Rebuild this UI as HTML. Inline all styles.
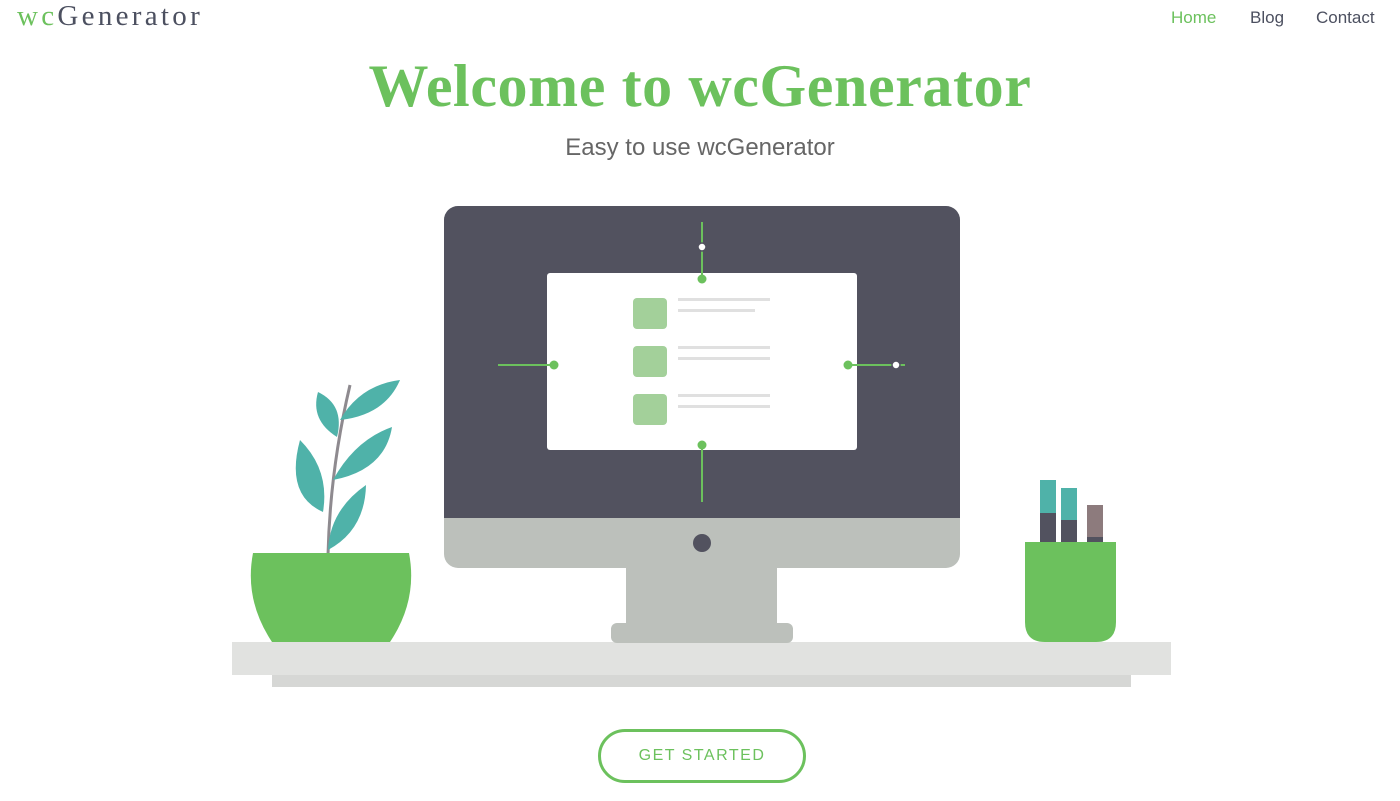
<!DOCTYPE html>
<html><head><meta charset="utf-8"><style>
html,body{margin:0;padding:0;background:#fff;width:1400px;height:801px;overflow:hidden;position:relative;font-family:"Liberation Sans",sans-serif}
.logo{position:absolute;left:17px;top:0px;font-family:"Liberation Serif",serif;font-size:29px;color:#4c5060;letter-spacing:3.3px}
.logo span{color:#6cc15d}
.nav{position:absolute;top:8px;font-size:17px;color:#4c5060}
h1{position:absolute;left:0;width:1400px;top:52px;margin:0;text-align:center;font-family:"Liberation Serif",serif;font-weight:bold;font-size:60px;color:#6cc15d;letter-spacing:0.6px}
.sub{position:absolute;left:0;width:1400px;top:134px;text-align:center;font-size:24px;color:#666;font-weight:300}
.btn{position:absolute;left:598px;top:729px;width:208px;height:54px;border:3px solid #6cc15d;border-radius:28px;box-sizing:border-box;text-align:center;line-height:48px;color:#6cc15d;font-size:16px;letter-spacing:1.5px}
svg{position:absolute;left:0;top:0}
</style></head><body>
<div class="logo"><span>wc</span>Generator</div>
<div class="nav" style="left:1171px;color:#6cc15d">Home</div>
<div class="nav" style="left:1250px">Blog</div>
<div class="nav" style="left:1316px">Contact</div>
<h1>Welcome to wcGenerator</h1>
<div class="sub">Easy to use wcGenerator</div>
<svg width="1400" height="801">
<rect x="232" y="642" width="939" height="33" fill="#e1e2e0"/>
<rect x="272" y="675" width="859" height="12" fill="#d6d7d5"/>
<rect x="626" y="566" width="151" height="60" fill="#bcc0bb"/>
<rect x="611" y="623" width="182" height="20" rx="6" fill="#bcc0bb"/>
<rect x="444" y="206" width="516" height="362" rx="14" fill="#bcc0bb"/>
<path d="M458 206 H946 A14 14 0 0 1 960 220 V518 H444 V220 A14 14 0 0 1 458 206 Z" fill="#52525f"/>
<circle cx="702" cy="543" r="9" fill="#52525f"/>
<rect x="547" y="273" width="310" height="177" rx="3" fill="#fff"/>
<g stroke="#6cc15d" stroke-width="2">
<line x1="702" y1="222" x2="702" y2="278"/><line x1="702" y1="444" x2="702" y2="502"/>
<line x1="498" y1="365" x2="554" y2="365"/><line x1="848" y1="365" x2="905" y2="365"/>
</g>
<g fill="#6cc15d"><circle cx="702" cy="279" r="4.5"/><circle cx="702" cy="445" r="4.5"/><circle cx="554" cy="365" r="4.5"/><circle cx="848" cy="365" r="4.5"/></g>
<circle cx="702" cy="247" r="4" fill="#fff" stroke="#52525f" stroke-width="1.5"/>
<circle cx="896" cy="365" r="4" fill="#fff" stroke="#52525f" stroke-width="1.5"/>
<g fill="#a3d09a"><rect x="633" y="298" width="34" height="31" rx="4"/><rect x="633" y="346" width="34" height="31" rx="4"/><rect x="633" y="394" width="34" height="31" rx="4"/></g>
<g fill="#e0e0e0"><rect x="678" y="298" width="92" height="3"/><rect x="678" y="309" width="77" height="3"/><rect x="678" y="346" width="92" height="3"/><rect x="678" y="357" width="92" height="3"/><rect x="678" y="394" width="92" height="3"/><rect x="678" y="405" width="92" height="3"/></g>
<path d="M328 555 Q330 470 350 385" stroke="#8e8a8f" stroke-width="3" fill="none"/>
<path d="M340 420 Q360 385 400 380 Q385 415 340 420Z" fill="#4fb2a9"/>
<path d="M337 437 Q310 420 318 392 Q345 405 337 437Z" fill="#4fb2a9"/>
<path d="M333 480 Q355 440 392 427 Q385 470 333 480Z" fill="#4fb2a9"/>
<path d="M323 512 Q285 495 300 440 Q330 470 323 512Z" fill="#4fb2a9"/>
<path d="M328 550 Q330 510 366 485 Q365 530 328 550Z" fill="#4fb2a9"/>
<path d="M253 553 H409 Q418 600 390 642 H272 Q244 600 253 553Z" fill="#6cc15d"/>
<rect x="1040" y="480" width="16" height="34" fill="#4fb2a9"/><rect x="1040" y="513" width="16" height="32" fill="#52525f"/>
<rect x="1061" y="488" width="16" height="33" fill="#4fb2a9"/><rect x="1061" y="520" width="16" height="25" fill="#52525f"/>
<rect x="1087" y="505" width="16" height="33" fill="#8d7b7d"/><rect x="1087" y="537" width="16" height="8" fill="#52525f"/>
<path d="M1025 542 H1116 V622 Q1116 642 1096 642 H1045 Q1025 642 1025 622Z" fill="#6cc15d"/>
</svg>
<div class="btn">GET STARTED</div>
</body></html>
